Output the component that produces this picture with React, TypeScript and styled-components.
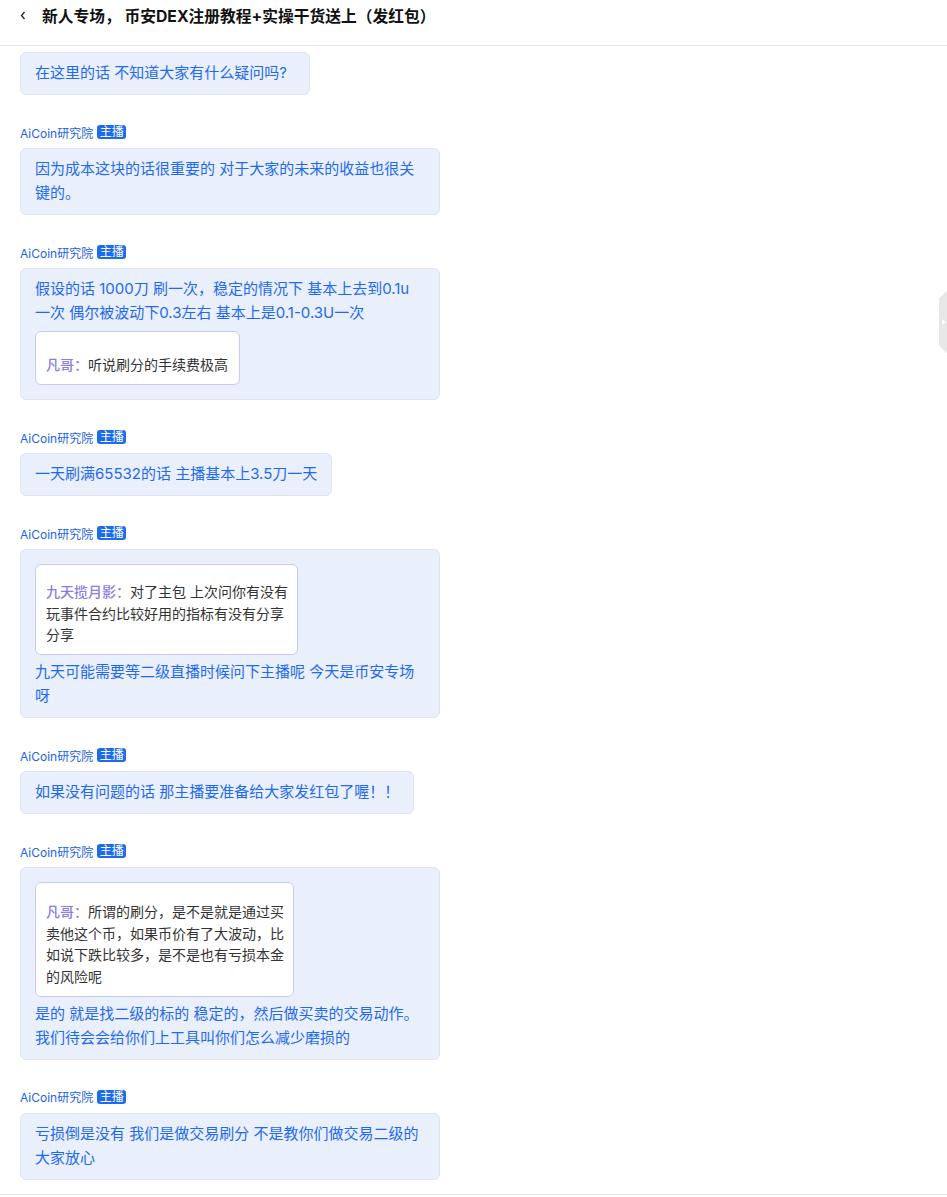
import React from "react";
import styled, {createGlobalStyle} from "styled-components";

const GlobalStyle = createGlobalStyle`
    body {
        margin: 0;
        background: #fff;
        font-family: Inter, "Noto Sans CJK SC", sans-serif;
    }
`;

const Page = styled.div`
    position: relative;
    width: 947px;
    min-height: 1197px;
    overflow: hidden;
    background: #fff;
`;

const Header = styled.div`
    box-sizing: border-box;
    height: 46px;
    border-bottom: 1px solid #e6e6e6;
    display: flex;
    align-items: flex-start;
    padding: 7px 0 0 20px;
    gap: 16px;
`;

const Back = styled.span`
    display: flex;
    align-items: center;
    height: 9px;
    margin-top: 4px;
`;

const Title = styled.h1`
    margin: 0;
    font-size: 15.75px;
    font-weight: 700;
    color: #111;
    line-height: 20px;
`;

const Feed = styled.div`
    display: flex;
    flex-direction: column;
    gap: 29px;
    padding: 6px 20px 14px;
`;

const Item = styled.div`
    display: flex;
    flex-direction: column;
    align-items: flex-start;
`;

const NameRow = styled.div`
    display: flex;
    align-items: center;
    gap: 4px;
    height: 16px;
    margin-bottom: 8px;
    font-size: 12px;
    color: #1b63e6;
`;

const Badge = styled.span`
    display: inline-flex;
    align-items: center;
    justify-content: center;
    width: 29px;
    height: 14px;
    border-radius: 3px;
    background: #1d6cf0;
    color: #fff;
    font-size: 12px;
    line-height: 14px;
`;

const Bubble = styled.div<{$wide?: boolean}>`
    box-sizing: border-box;
    width: ${p => (p.$wide ? "420px" : "auto")};
    max-width: 420px;
    padding: 8px 14px 9px;
    background: #e9effb;
    border: 1px solid #dde4f0;
    border-radius: 6px;
    color: #1f6af0;
    font-size: 15px;
    line-height: 24px;
`;

const Line = styled.span`
    display: block;
    white-space: pre;
`;

const Quote = styled.div<{$width: number; $padTop: number}>`
    box-sizing: border-box;
    width: ${p => p.$width}px;
    margin: 6px 0 5px;
    padding: ${p => p.$padTop}px 8px 8.5px 10px;
    background: #fff;
    border: 1px solid #cac8f6;
    border-radius: 6px;
    color: #333;
    font-size: 14px;
    line-height: 21.5px;
`;

const Who = styled.span`
    color: #8a7ee4;
    font-weight: 500;
`;

const SideTab = styled.div`
    position: absolute;
    right: 0;
    top: 291px;
    width: 8px;
    height: 62px;
    background: #e7e7e7;
    clip-path: polygon(100% 0, 0 12%, 0 88%, 100% 100%);
    display: flex;
    align-items: center;
    justify-content: flex-end;
    padding-right: 1px;
    box-sizing: border-box;
`;

const Footer = styled.div`
    border-top: 1px solid #e3e3e3;
    height: 4px;
`;

interface QuoteData {
    who: string;
    lines: string[];
    width: number;
    padTop: number;
}

interface Message {
    host?: boolean;
    wide?: boolean;
    lines: string[];
    before?: QuoteData;
    after?: QuoteData;
}

const messages: Message[] = [
    {lines: ["在这里的话 不知道大家有什么疑问吗?  "]},
    {host: true, wide: true, lines: ["因为成本这块的话很重要的 对于大家的未来的收益也很关", "键的。"]},
    {
        host: true,
        wide: true,
        lines: ["假设的话 1000刀 刷一次，稳定的情况下 基本上去到0.1u", "一次 偶尔被波动下0.3左右 基本上是0.1-0.3U一次"],
        after: {who: "凡哥：", lines: ["听说刷分的手续费极高"], width: 205, padTop: 22},
    },
    {host: true, lines: ["一天刷满65532的话 主播基本上3.5刀一天"]},
    {
        host: true,
        wide: true,
        before: {
            who: "九天揽月影：",
            lines: ["对了主包 上次问你有没有", "玩事件合约比较好用的指标有没有分享", "分享"],
            width: 263,
            padTop: 16,
        },
        lines: ["九天可能需要等二级直播时候问下主播呢 今天是币安专场", "呀"],
    },
    {host: true, lines: ["如果没有问题的话 那主播要准备给大家发红包了喔！！"]},
    {
        host: true,
        wide: true,
        before: {
            who: "凡哥：",
            lines: ["所谓的刷分，是不是就是通过买", "卖他这个币，如果币价有了大波动，比", "如说下跌比较多，是不是也有亏损本金", "的风险呢"],
            width: 259,
            padTop: 18,
        },
        lines: ["是的 就是找二级的标的 稳定的，然后做买卖的交易动作。", "我们待会会给你们上工具叫你们怎么减少磨损的"],
    },
    {host: true, wide: true, lines: ["亏损倒是没有 我们是做交易刷分 不是教你们做交易二级的", "大家放心"]},
];

const QuoteBlock = ({q}: {q: QuoteData}) => (
    <Quote $width={q.width} $padTop={q.padTop}>
        {q.lines.map((l, i) => (
            <Line key={i}>
                {i === 0 && <Who>{q.who}</Who>}
                {l}
            </Line>
        ))}
    </Quote>
);

export default function App() {
    return (
        <Page>
            <GlobalStyle/>
            <Header>
                <Back>
                    <svg width="6" height="9" viewBox="0 0 6 9">
                        <path d="M4.5 1 L1.5 4.5 L4.5 8" fill="none" stroke="#222" strokeWidth="1.3"/>
                    </svg>
                </Back>
                <Title>新人专场， 币安DEX注册教程+实操干货送上（发红包）</Title>
            </Header>
            <Feed>
                {messages.map((m, i) => (
                    <Item key={i}>
                        {m.host && (
                            <NameRow>
                                AiCoin研究院
                                <Badge>主播</Badge>
                            </NameRow>
                        )}
                        <Bubble $wide={m.wide}>
                            {m.before && <QuoteBlock q={m.before}/>}
                            {m.lines.map((l, j) => <Line key={j}>{l}</Line>)}
                            {m.after && <QuoteBlock q={m.after}/>}
                        </Bubble>
                    </Item>
                ))}
            </Feed>
            <Footer/>
            <SideTab>
                <svg width="4" height="6" viewBox="0 0 4 6">
                    <path d="M0 0 L4 3 L0 6 Z" fill="#fff"/>
                </svg>
            </SideTab>
        </Page>
    );
}
